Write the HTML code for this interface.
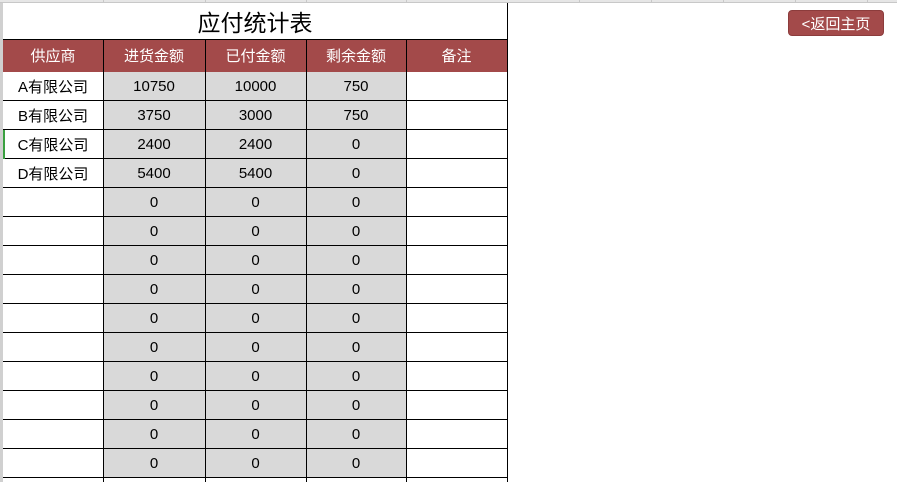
<!DOCTYPE html>
<html><head><meta charset="utf-8"><style>
*{margin:0;padding:0;box-sizing:border-box}
body{width:897px;height:482px;overflow:hidden;background:#fff;position:relative;font-family:"Liberation Sans","Noto Sans CJK SC",sans-serif}
.a{position:absolute}
.c{position:absolute;display:flex;align-items:center;justify-content:center;font-size:15px;color:#000}
</style></head><body>
<div class="a" style="left:0;top:0;width:3px;height:482px;background:#d0d0d0"></div>
<div class="a" style="left:0;top:0;width:897px;height:3px;background:#e6e6e6;border-bottom:1px solid #c8c8c8"></div>
<div class="a" style="left:579px;top:0;width:1px;height:3px;background:#c8c8c8"></div>
<div class="a" style="left:651px;top:0;width:1px;height:3px;background:#c8c8c8"></div>
<div class="a" style="left:723px;top:0;width:1px;height:3px;background:#c8c8c8"></div>
<div class="a" style="left:795px;top:0;width:1px;height:3px;background:#c8c8c8"></div>
<div class="a" style="left:867px;top:0;width:1px;height:3px;background:#c8c8c8"></div>
<div class="a" style="left:103px;top:0;width:1px;height:3px;background:#c8c8c8"></div>
<div class="a" style="left:205px;top:0;width:1px;height:3px;background:#c8c8c8"></div>
<div class="a" style="left:306px;top:0;width:1px;height:3px;background:#c8c8c8"></div>
<div class="a" style="left:406px;top:0;width:1px;height:3px;background:#c8c8c8"></div>
<div class="c" style="left:3px;top:3px;width:504px;height:36px;font-size:23px">应付统计表</div>
<div class="a" style="left:507px;top:3px;width:1px;height:479px;background:#000"></div>
<div id="t"></div>
<div class="c" style="left:788px;top:10px;width:96px;height:26px;background:#a34a4a;border:1px solid #8c3c3c;border-radius:4px;color:#fff;font-size:15px">&lt;返回主页</div>
<script>
var x=[3,103,205,306,406,507];
var h=document.getElementById('t'),s='';
s+='<div class="a" style="left:3px;top:39px;width:504px;height:33px;background:#a34a4a;border-top:1px solid #000"></div>';
var hd=['供应商','进货金额','已付金额','剩余金额','备注'];
for(var i=0;i<5;i++)s+='<div class="c" style="left:'+x[i]+'px;top:39px;width:'+(x[i+1]-x[i])+'px;height:33px;color:#fff;font-size:15px">'+hd[i]+'</div>';
var d=[['A有限公司','10750','10000','750'],['B有限公司','3750','3000','750'],['C有限公司','2400','2400','0'],['D有限公司','5400','5400','0']];
for(var r=0;r<14;r++){var y=72+r*29;var row=d[r]||['','0','0','0'];
s+='<div class="a" style="left:103px;top:'+y+'px;width:303px;height:29px;background:#d9d9d9"></div>';
for(var i=0;i<4;i++)s+='<div class="c" style="left:'+x[i]+'px;top:'+y+'px;width:'+(x[i+1]-x[i])+'px;height:29px">'+row[i]+'</div>';
s+='<div class="a" style="left:3px;top:'+(y+28)+'px;width:505px;height:1px;background:#000"></div>';}
for(var i=1;i<5;i++)s+='<div class="a" style="left:'+x[i]+'px;top:39px;width:1px;height:443px;background:#000"></div>';
s+='<div class="a" style="left:3px;top:130px;width:2px;height:29px;background:#3aa040"></div>';
h.innerHTML=s;
</script>
</body></html>
